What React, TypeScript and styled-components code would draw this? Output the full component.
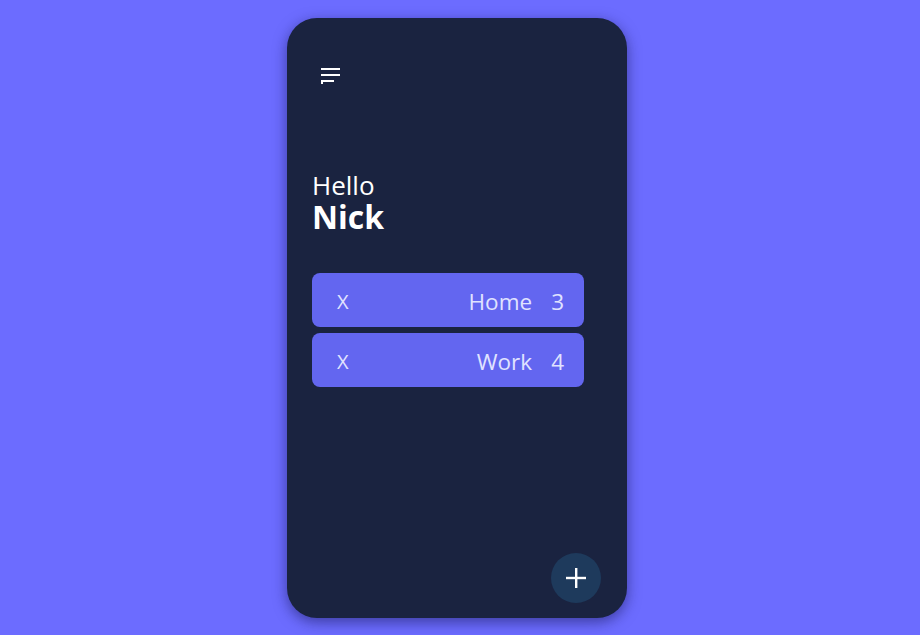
import React from "react";
import styled, { createGlobalStyle } from "styled-components";

const Global = createGlobalStyle`
  html, body { margin: 0; padding: 0; background: #6c6cff; }
  body { font-family: "Open Sans", "Noto Sans", sans-serif; }
`;

const Page = styled.div`
  display: flex;
  justify-content: center;
  padding-top: 18px;
  padding-right: 6px;
  min-height: 635px;
  box-sizing: border-box;
`;

const Phone = styled.div`
  width: 340px;
  height: 600px;
  background: #1a2340;
  border-radius: 30px;
  box-shadow: 0 4px 14px rgba(20, 20, 80, 0.55);
  box-sizing: border-box;
  padding: 48px 25px 15px 25px;
  display: flex;
  flex-direction: column;
  position: relative;
`;

const MenuButton = styled.div`
  margin-left: 9px;
  width: 22px;
  height: 20px;
  display: flex;
`;

const Greeting = styled.div`
  margin-top: 84px;
  color: #ffffff;
  display: flex;
  flex-direction: column;
`;

const Hello = styled.div`
  font-size: 26px;
  line-height: 30px;
  font-weight: 400;
`;

const Name = styled.div`
  font-size: 32px;
  line-height: 34px;
  font-weight: 700;
`;

const List = styled.div`
  margin-top: 39px;
  width: 272px;
  display: flex;
  flex-direction: column;
  gap: 6px;
`;

const Row = styled.div`
  height: 54px;
  background: #6366f0;
  border-radius: 8px;
  display: flex;
  align-items: center;
  padding: 2px 20px 0 25px;
  box-sizing: border-box;
  color: #e0e3ff;
  font-size: 22.5px;
`;

const Remove = styled.span`
  font-size: 20px;
  flex: 1;
`;

const Label = styled.span``;

const Count = styled.span`
  margin-left: 19px;
`;

const Fab = styled.div`
  position: absolute;
  right: 26px;
  bottom: 15px;
  width: 50px;
  height: 50px;
  border-radius: 50%;
  background: #1e3a5c;
  display: flex;
  align-items: center;
  justify-content: center;
`;

const lists = [
  { name: "Home", count: 3 },
  { name: "Work", count: 4 },
];

export default function App() {
  return (
    <>
      <Global />
      <Page>
        <Phone>
          <MenuButton>
            <svg width="22" height="20" viewBox="0 0 22 20">
              <rect x="0" y="2" width="19" height="2" fill="#fff" />
              <rect x="0" y="8" width="19" height="2" fill="#fff" />
              <rect x="0" y="14" width="13" height="2" fill="#fff" />
              <rect x="0" y="14" width="2" height="4" fill="#fff" />
            </svg>
          </MenuButton>
          <Greeting>
            <Hello>Hello</Hello>
            <Name>Nick</Name>
          </Greeting>
          <List>
            {lists.map((l) => (
              <Row key={l.name}>
                <Remove>X</Remove>
                <Label>{l.name}</Label>
                <Count>{l.count}</Count>
              </Row>
            ))}
          </List>
          <Fab>
            <svg width="22" height="22" viewBox="0 0 22 22">
              <rect x="10" y="1" width="2.4" height="20" fill="#fff" />
              <rect x="1" y="9.8" width="20" height="2.4" fill="#fff" />
            </svg>
          </Fab>
        </Phone>
      </Page>
    </>
  );
}
